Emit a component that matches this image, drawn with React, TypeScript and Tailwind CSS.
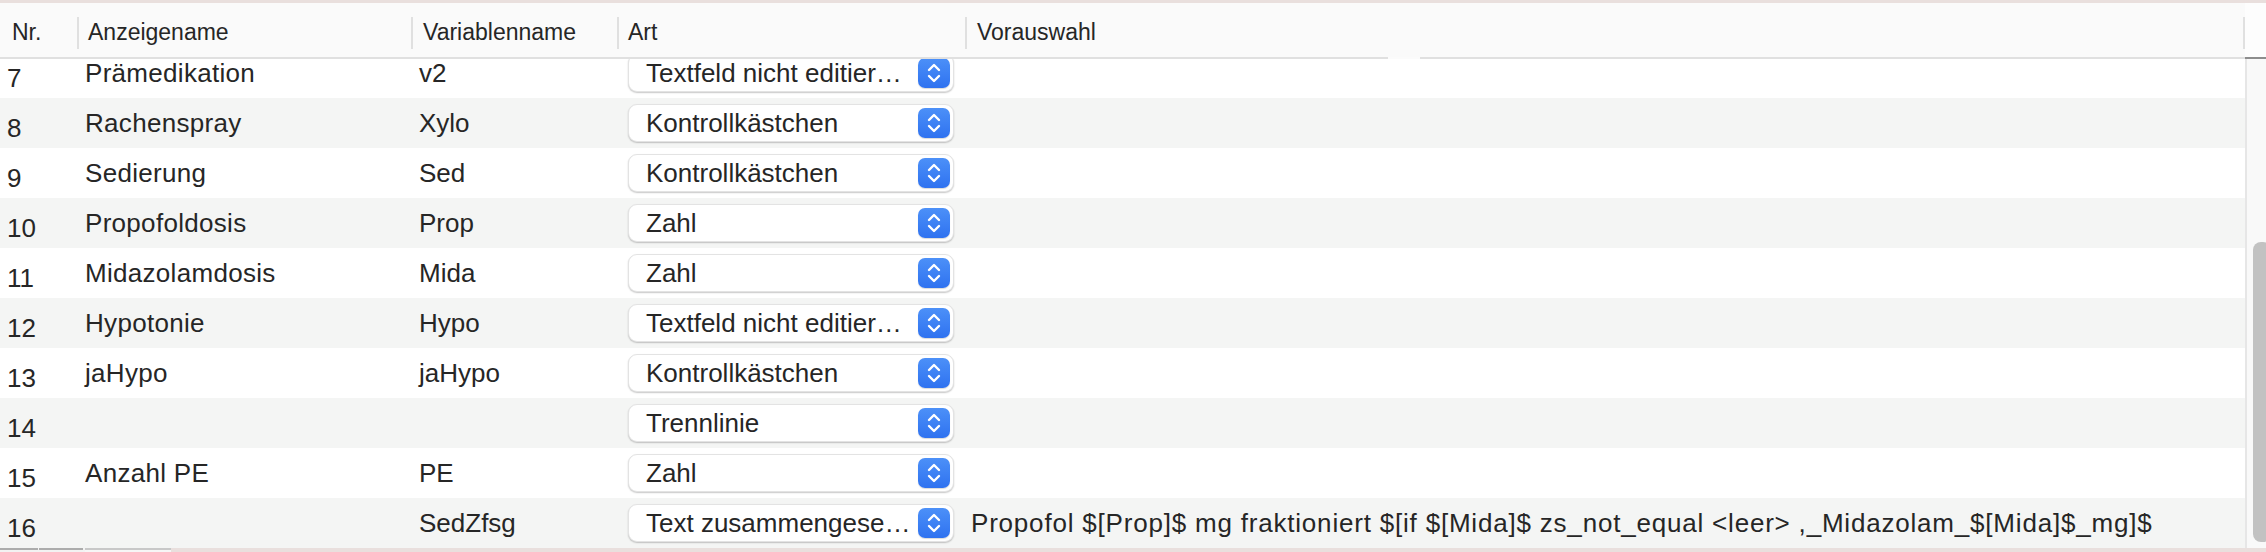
type Row = {
  nr: number;
  name: string;
  variable: string;
  art: string;
  preset?: string;
};

const ROWS: Row[] = [
  { nr: 7, name: 'Prämedikation', variable: 'v2', art: 'Textfeld nicht editier…' },
  { nr: 8, name: 'Rachenspray', variable: 'Xylo', art: 'Kontrollkästchen' },
  { nr: 9, name: 'Sedierung', variable: 'Sed', art: 'Kontrollkästchen' },
  { nr: 10, name: 'Propofoldosis', variable: 'Prop', art: 'Zahl' },
  { nr: 11, name: 'Midazolamdosis', variable: 'Mida', art: 'Zahl' },
  { nr: 12, name: 'Hypotonie', variable: 'Hypo', art: 'Textfeld nicht editier…' },
  { nr: 13, name: 'jaHypo', variable: 'jaHypo', art: 'Kontrollkästchen' },
  { nr: 14, name: '', variable: '', art: 'Trennlinie' },
  { nr: 15, name: 'Anzahl PE', variable: 'PE', art: 'Zahl' },
  {
    nr: 16,
    name: '',
    variable: 'SedZfsg',
    art: 'Text zusammengese…',
    preset:
      'Propofol $[Prop]$ mg fraktioniert $[if $[Mida]$ zs_not_equal <leer> ,_Midazolam_$[Mida]$_mg]$',
  },
];

function Stepper() {
  return (
    <div className="flex h-[30px] w-[32px] items-center justify-center rounded-[7px] bg-gradient-to-b from-[#4c90f8] to-[#2f72f0] shadow-[0_1px_1px_rgba(0,0,0,0.15)]">
      <svg width="14" height="24" viewBox="0 0 14 24" fill="none" stroke="white" strokeWidth="2.4" strokeLinecap="round" strokeLinejoin="round">
        <polyline points="2,9 7,4 12,9" />
        <polyline points="2,15 7,20 12,15" />
      </svg>
    </div>
  );
}

function Select({ value }: { value: string }) {
  return (
    <div className="flex h-[38px] w-[326px] items-center justify-between rounded-[9px] border border-[#e3e3e3] bg-white pr-[3px] pl-[17px] shadow-[0_1px_1.5px_rgba(0,0,0,0.22)]">
      <span className="whitespace-nowrap">{value}</span>
      <Stepper />
    </div>
  );
}

export default function App() {
  return (
    <div className="flex h-[552px] w-[2266px] flex-col overflow-hidden bg-white font-['Liberation_Sans',Arial,sans-serif] text-[#262626]">
      {/* top edge */}
      <div className="h-[3px] bg-[#e9dfdd]" />

      {/* Header */}
      <div className="flex h-[54px] text-[23px]">
        <div className="grid flex-1 grid-cols-[77px_334px_206px_348px_1280px] items-center bg-[#fafafa] pt-[5px]">
          <div className="pl-3">Nr.</div>
          <div className="flex h-[32px] items-center border-l-2 border-[#e0e0e0] pl-[9px]">Anzeigename</div>
          <div className="flex h-[32px] items-center border-l-2 border-[#e0e0e0] pl-[10px]">Variablenname</div>
          <div className="flex h-[32px] items-center border-l-2 border-[#e0e0e0] pl-[9px]">Art</div>
          <div className="flex h-[32px] items-center border-x-2 border-[#e0e0e0] pl-[10px]">Vorauswahl</div>
        </div>
        <div className="w-[21px] bg-[#fdfdfd]" />
      </div>
      <div className="flex h-[2px]">
        <div className="w-[1388px] bg-[#e0e0e0]" />
        <div className="w-[32px] bg-[#fbfbfb]" />
        <div className="flex-1 bg-[#e0e0e0]" />
        <div className="w-[21px] bg-[#8d8d8d]" />
      </div>

      {/* Body */}
      <div className="flex h-[489px] overflow-hidden">
        <div className="flex-1 text-[26px]">
          {ROWS.map((r, i) => (
            <div
              key={r.nr}
              className={`grid h-[50px] grid-cols-[77px_334px_206px_348px_1280px] items-center ${
                i === 0 ? '-mt-[11px]' : ''
              } ${r.nr % 2 === 0 ? 'bg-[#f4f5f4]' : 'bg-white'}`}
            >
              <div className="pt-[10px] pl-[7px]">{r.nr}</div>
              <div className="pl-2 tracking-[0.3px] whitespace-nowrap">{r.name}</div>
              <div className="pl-2">{r.variable}</div>
              <div className="pl-[11px]">
                <Select value={r.art} />
              </div>
              <div className="pl-[6px] tracking-[0.8px] whitespace-nowrap">{r.preset}</div>
            </div>
          ))}
        </div>
        {/* scrollbar */}
        <div className="w-[21px] overflow-hidden border-l-2 border-[#e6e6e6] bg-[#f9f9f9] pt-[183px] pl-[6px]">
          <div className="h-[300px] w-[18px] rounded-[8px] bg-[#c2c2c2]" />
        </div>
      </div>

      {/* bottom edge */}
      <div className="flex h-[4px] bg-[#e9dfdd]">
        <div className="w-[38px] border-t-2 border-[#acacac] bg-[#f2f2f2]" />
        <div className="w-[1px] bg-[#f2f2f2]" />
        <div className="w-[44px] border-t-2 border-[#acacac] bg-[#f2f2f2]" />
        <div className="w-[2px] bg-[#f2f2f2]" />
        <div className="w-[86px] border-t-2 border-[#c8c8c8] bg-[#f6f6f6]" />
      </div>
    </div>
  );
}
